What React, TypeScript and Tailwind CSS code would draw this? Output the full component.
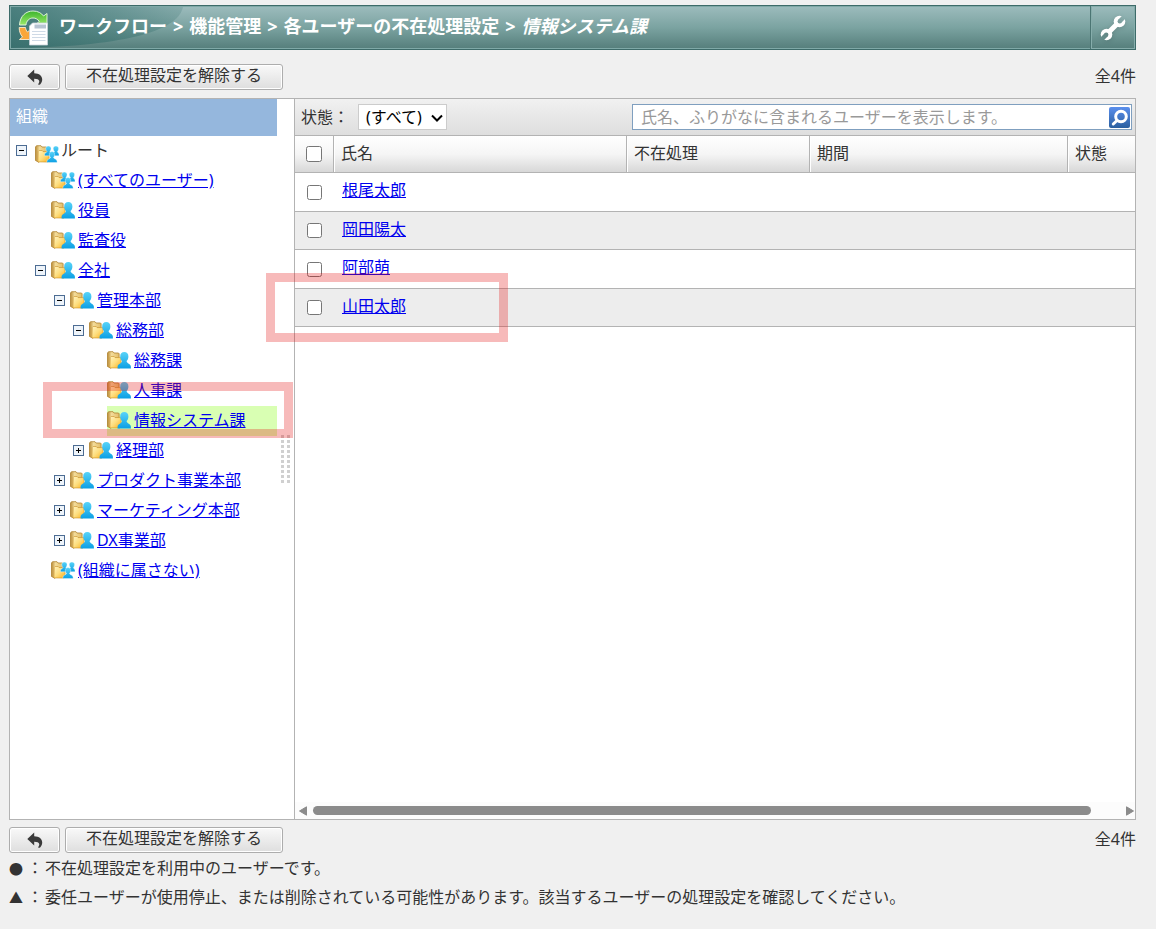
import React from "react";

type TreeNode = {
  label: string;
  depth: number;
  toggle?: "open" | "closed";
  group?: boolean;
  selected?: boolean;
};

const nodes: TreeNode[] = [
  { label: "(すべてのユーザー)", depth: 1, group: true },
  { label: "役員", depth: 1 },
  { label: "監査役", depth: 1 },
  { label: "全社", depth: 1, toggle: "open" },
  { label: "管理本部", depth: 2, toggle: "open" },
  { label: "総務部", depth: 3, toggle: "open" },
  { label: "総務課", depth: 4 },
  { label: "人事課", depth: 4 },
  { label: "情報システム課", depth: 4, selected: true },
  { label: "経理部", depth: 3, toggle: "closed" },
  { label: "プロダクト事業本部", depth: 2, toggle: "closed" },
  { label: "マーケティング本部", depth: 2, toggle: "closed" },
  { label: "DX事業部", depth: 2, toggle: "closed" },
  { label: "(組織に属さない)", depth: 1, group: true },
];

const indents = ["pl-[6px]", "pl-[25px]", "pl-[44px]", "pl-[63px]", "pl-[81px]"];

const users = ["根尾太郎", "岡田陽太", "阿部萌", "山田太郎"];

const notes = [
  { mark: "●", text: "不在処理設定を利用中のユーザーです。" },
  {
    mark: "▲",
    text: "委任ユーザーが使用停止、または削除されている可能性があります。該当するユーザーの処理設定を確認してください。",
  },
];

function IconDefs() {
  return (
    <svg className="absolute h-0 w-0" aria-hidden="true">
      <defs>
        <linearGradient id="folder" x1="0" y1="0" x2="1" y2="1">
          <stop offset="0" stopColor="#fff3c0" />
          <stop offset="0.5" stopColor="#fede7e" />
          <stop offset="1" stopColor="#fbb01c" />
        </linearGradient>
        <linearGradient id="folderBack" x1="0" y1="0" x2="1" y2="0">
          <stop offset="0" stopColor="#b98a35" />
          <stop offset="0.35" stopColor="#f3dc9a" />
          <stop offset="1" stopColor="#e3bd68" />
        </linearGradient>
        <linearGradient id="person" x1="0" y1="0" x2="0" y2="1">
          <stop offset="0" stopColor="#58d3f8" />
          <stop offset="1" stopColor="#0c9fe4" />
        </linearGradient>
        <linearGradient id="swoosh" x1="0" y1="0" x2="1" y2="0">
          <stop offset="0" stopColor="#2f6b69" stopOpacity="0.75" />
          <stop offset="0.6" stopColor="#2f6b69" stopOpacity="0.45" />
          <stop offset="1" stopColor="#2f6b69" stopOpacity="0.2" />
        </linearGradient>
        <linearGradient id="arrowGreen" x1="0" y1="0" x2="0" y2="1">
          <stop offset="0" stopColor="#3cb52c" />
          <stop offset="1" stopColor="#9be86a" />
        </linearGradient>
        <mask id="jaws">
          <path d="M0 0h28v28H0z" fill="#fff" />
          <path d="M21 7 27 1M7 21 1 27" stroke="#000" strokeWidth="4.400" />
          <circle cx="20.800" cy="7.200" r="2.200" fill="#000" />
          <circle cx="7.200" cy="20.800" r="2.200" fill="#000" />
        </mask>
      </defs>
    </svg>
  );
}

function FolderIcon({ group }: { group?: boolean }) {
  return (
    <svg className="h-[18px] w-6 shrink-0" viewBox="0 0 24 18" aria-hidden="true">
      <path d="M.5 2 1.500.7h4.500l1 1.300h4.500l.6.8v4H4v10.500L.5 15.500z" fill="url(#folderBack)" stroke="#b08330" strokeWidth=".8" />
      <path d="M2.900 16.900 3.200 6.500l1-1h3l.9 1.100h6v9.200l-1.200 1.300z" fill="url(#folder)" stroke="#c98f26" strokeWidth=".6" />
      {group ? (
        <g fill="url(#person)" stroke="#fff" strokeWidth=".4">
          <path d="M13.400 1c1.700 0 2.700 1.100 2.700 2.600 0 1.300-.7 2.300-1.200 2.900.3 1 2 1.400 2 2.800v1.500H9.500V9.300c0-1.400 2.300-1.800 2.500-2.800-.6-.6-1.300-1.600-1.300-2.900 0-1.500 1-2.600 2.700-2.600z" />
          <path d="M20.900 1c1.700 0 2.700 1.100 2.700 2.600 0 1.300-.6 2.300-1.200 2.900.1 1 1.600 1.400 1.600 2.800v1.500h-6.600V9.300c0-1.400 1.900-1.800 2.100-2.800-.6-.6-1.300-1.600-1.300-2.900 0-1.500 1-2.600 2.700-2.600z" />
          <path d="M17 6.500c1.800 0 2.700 1.200 2.700 2.800 0 1.500-.6 2.600-1.200 3.200.2 1.400 3.600 1.500 3.600 3.700v1.400H11.900v-1.400c0-2.200 3.400-2.300 3.600-3.700-.6-.6-1.200-1.700-1.200-3.200 0-1.600.9-2.800 2.700-2.800z" />
        </g>
      ) : (
        <path
          d="M17.300 1c2.600 0 4.100 1.700 4.100 4.400 0 2.100-.8 3.700-1.800 4.700.1 2.700 4.300 2.600 4.300 5.700v1.700H10.600v-1.700c0-3.100 4.300-3 4.400-5.700-1-1-1.800-2.600-1.800-4.700C13.200 2.700 14.700 1 17.300 1z"
          fill="url(#person)"
        />
      )}
    </svg>
  );
}

function Toggle({ state }: { state: "open" | "closed" }) {
  return (
    <button type="button" aria-label={state === "open" ? "閉じる" : "開く"} className="block h-3 w-[11px] pb-px">
      <svg className="h-[11px] w-[11px]" viewBox="0 0 11 11" shapeRendering="crispEdges">
        <rect x=".5" y=".5" width="10" height="10" fill="#eef4fa" stroke="#4c6c93" />
        <path d="M3 5h5v1H3z" fill="#000" />
        {state === "closed" && <path d="M5 3h1v5H5z" fill="#000" />}
      </svg>
    </button>
  );
}

function WorkflowIcon() {
  return (
    <svg className="h-9 w-8 shrink-0" viewBox="0 0 32 36" aria-hidden="true">
      <path d="M1.500 15C2 6 8 1 15 1c5 0 8.500 2.200 10.500 5l3.500-2.500V15H17.500l3.700-3.700C19.500 9 17.500 8 15 8c-4 0-6.500 3-7 7z" fill="url(#arrowGreen)" stroke="#e8fbe0" strokeWidth=".9" />
      <path d="M1.200 17.500c0 4 1.200 7 3.300 9.500L1.500 29.500H13V19l-3.500 3C8.300 20.800 7.700 19.300 7.500 17.500z" fill="#f9a63a" stroke="#fdebcf" strokeWidth=".9" />
      <path d="M14.500 13h15v22h-18V16z" fill="#fff" stroke="#c9d3dc" strokeWidth=".8" />
      <path d="M16.500 14.500h11.500v4H16.500z" fill="#b7c4d2" />
      <path d="M14 21.500h13.500M14 24.500h13.500M14 27.500h13.500M14 30.500h13.500" stroke="#cfdae6" />
    </svg>
  );
}

function WrenchIcon() {
  return (
    <svg className="h-7 w-7 drop-shadow-sm" viewBox="0 0 28 28" aria-hidden="true">
      <g mask="url(#jaws)">
        <path d="M8 20 20 8" stroke="#fff" strokeWidth="5" />
        <circle cx="20.500" cy="7.500" r="5.800" fill="#fff" />
        <circle cx="7.500" cy="20.500" r="5.800" fill="#fff" />
      </g>
    </svg>
  );
}

function ActionBar({ className }: { className: string }) {
  const button =
    "flex h-[26px] items-center justify-center rounded-[3px] border border-[#adadad] bg-linear-to-b from-[#f9f9f9] to-[#dedede] shadow-[inset_0_0_0_1px_#fff]";
  return (
    <div className={`flex justify-between ${className}`}>
      <div className="flex gap-[5px]">
        <button type="button" aria-label="戻る" className={`${button} w-[51px]`}>
          <svg className="h-4 w-4" viewBox="0 0 16 16" aria-hidden="true">
            <path d="M7.200.5v3.700c5 .2 8 2.400 8 6.300 0 2-.8 3.800-2.300 5.200l-2-.2c1.200-1.400 1.500-2.500 1.300-3.500-.3-1.500-2-2.200-5-2.200v3.700L.3 7z" fill="#3a3a3a" />
          </svg>
        </button>
        <button type="button" className={`${button} w-[218px] pb-1`}>
          不在処理設定を解除する
        </button>
      </div>
      <p className="leading-6">全4件</p>
    </div>
  );
}

function OrgTree() {
  return (
    <nav className="flex w-[285px] shrink-0 border-r border-[#b3b3b3] bg-white">
      <div className="min-w-0 flex-1">
        <h2 className="h-[37px] bg-[#95b7dd] px-[6px] leading-[34px] text-white">組織</h2>
        <ul>
          <li className="flex h-[30px] items-center pl-[6px]">
            <Toggle state="open" />
            <span className="ml-2 pt-1.5">
              <FolderIcon group />
            </span>
            <span className="ml-0.5 pb-0.5">ルート</span>
          </li>
          {nodes.map((node) => (
            <li key={node.label} className={`flex h-[30px] items-center gap-[5px] ${indents[node.depth]}`}>
              <span className="w-[11px] shrink-0">{node.toggle && <Toggle state={node.toggle} />}</span>
              <span className={`flex h-full flex-1 items-center gap-[3px] pb-0.5 ${node.selected ? "bg-[#d9ffb3]" : ""}`}>
                <FolderIcon group={node.group} />
                <a href="#" className="whitespace-nowrap text-[#0000ee] underline">
                  {node.label}
                </a>
              </span>
            </li>
          ))}
        </ul>
      </div>
      {/* splitter */}
      <div className="flex w-[17px] cursor-col-resize items-center justify-center">
        <div className="grid grid-cols-2 gap-x-[3px] gap-y-[2px]">
          {Array.from({ length: 20 }, (_, i) => (
            <i key={i} className="h-[3px] w-[3px] bg-[#d0d0d0]" />
          ))}
        </div>
      </div>
    </nav>
  );
}

function FilterBar() {
  return (
    <div className="flex h-[37px] items-center justify-between border-b border-[#b3b3b3] bg-linear-to-b from-[#f1f1f1] to-[#dedede] pr-[3px] pl-[6px]">
      <div className="flex items-center">
        <label htmlFor="status" className="w-[57px] whitespace-nowrap">
          状態：
        </label>
        <div className="relative">
          <select id="status" className="h-[26px] w-[89px] appearance-none border border-[#ccc] bg-white pl-[7px] text-black">
            <option>(すべて)</option>
          </select>
          <svg className="pointer-events-none absolute top-2 right-1 h-3 w-3" viewBox="0 0 12 12" aria-hidden="true">
            <path d="M1 3.500l5 5 5-5" fill="none" stroke="#000" strokeWidth="2" />
          </svg>
        </div>
      </div>
      <div className="flex h-[26px] w-[500px] items-center border border-[#7f9fbf] bg-white pr-px">
        <input
          type="text"
          aria-label="ユーザー検索"
          placeholder="氏名、ふりがなに含まれるユーザーを表示します。"
          className="h-full min-w-0 flex-1 px-2 outline-none placeholder:text-[#999]"
        />
        <button type="button" aria-label="検索" className="h-[21px] w-[21px] rounded-xs bg-linear-to-b from-[#5a8fee] to-[#2a5f9f]">
          <svg className="h-[21px] w-[21px]" viewBox="0 0 21 21">
            <circle cx="12" cy="9.500" r="5.300" fill="none" stroke="#fff" strokeWidth="3" />
            <path d="M8 13.500 4.300 17" stroke="#fff" strokeWidth="3" strokeLinecap="round" />
          </svg>
        </button>
      </div>
    </div>
  );
}

function UserTable() {
  const th = "border-r border-b border-[#b3b3b3] px-[7px] pb-0.5 text-left font-normal shadow-[inset_1px_0_0_#fff] last:border-r-0";
  return (
    <table className="w-full table-fixed border-separate border-spacing-0">
      <colgroup>
        <col className="w-[39px]" />
        <col />
        <col className="w-[183px]" />
        <col className="w-[258px]" />
        <col className="w-[67px]" />
      </colgroup>
      <thead>
        <tr className="h-[37px] bg-linear-to-b from-white via-[#f5f5f5] to-[#d6d6d6]">
          <th className="border-r border-b border-[#b3b3b3]">
            <input type="checkbox" aria-label="すべて選択" className="mx-auto block h-4 w-4" />
          </th>
          <th className={th}>氏名</th>
          <th className={th}>不在処理</th>
          <th className={th}>期間</th>
          <th className={th}>状態</th>
        </tr>
      </thead>
      <tbody>
        {users.map((name) => (
          <tr key={name} className="odd:h-[39px] even:h-[38px] even:bg-[#ededed]">
            <td className="border-b border-[#b3b3b3]">
              <input type="checkbox" aria-label={name} className="mx-auto block h-[15px] w-[15px]" />
            </td>
            <td className="border-b border-[#b3b3b3] px-2 pb-1">
              <a href="#" className="text-[#0000ee] underline">
                {name}
              </a>
            </td>
            <td className="border-b border-[#b3b3b3]" />
            <td className="border-b border-[#b3b3b3]" />
            <td className="border-b border-[#b3b3b3]" />
          </tr>
        ))}
      </tbody>
    </table>
  );
}

function ScrollBar() {
  return (
    <div className="mt-auto flex h-[17px] items-center bg-[#fcfcfc] px-1" aria-hidden="true">
      <svg className="h-[10px] w-2" viewBox="0 0 8 10">
        <path d="M7.500.8v8.400L.5 5z" fill="#8b8b8b" stroke="#8b8b8b" strokeLinejoin="round" />
      </svg>
      <div className="mr-[35px] ml-1.5 h-[9px] flex-1 rounded-full bg-[#8b8b8b]" />
      <svg className="-mr-[3px] h-[10px] w-2" viewBox="0 0 8 10">
        <path d="M.5.8v8.400l7-4.200z" fill="#8b8b8b" stroke="#8b8b8b" strokeLinejoin="round" />
      </svg>
    </div>
  );
}

function Header() {
  return (
    <header className="relative flex h-[45px] items-center border border-[#3d6b69] bg-linear-to-b from-[#9dbcbd] via-[#7ba3a1] to-[#557e7b] shadow-[inset_0_0_0_1px_#7fa9a7]">
      <svg className="absolute inset-y-0 left-0 h-full w-[175px]" viewBox="0 0 175 43" preserveAspectRatio="none" aria-hidden="true">
        <path d="M1 1h172C168 26 110 41 1 42z" fill="url(#swoosh)" />
      </svg>
      <div className="relative ml-2">
        <WorkflowIcon />
      </div>
      <h1 className="relative ml-[9px] flex flex-1 gap-1.5 pb-1 text-[18px] leading-6 font-bold whitespace-nowrap text-white">
        <span>ワークフロー</span>
        <span>&gt;</span>
        <span>機能管理</span>
        <span>&gt;</span>
        <span>各ユーザーの不在処理設定</span>
        <span>&gt;</span>
        <em>情報システム課</em>
      </h1>
      <button
        type="button"
        aria-label="設定"
        className="flex h-full w-[45px] items-center justify-center border-l border-[#4b7573] shadow-[inset_0_0_0_1px_#86adab]"
      >
        <WrenchIcon />
      </button>
    </header>
  );
}

export default function App() {
  return (
    <div className="flex min-h-screen flex-col bg-[#f0f0f0] pt-[5px] pr-5 pb-[17px] pl-[9px] font-['Noto_Sans','Noto_Sans_CJK_JP',sans-serif] text-[16px] leading-6 text-[#333]">
      <IconDefs />
      <Header />
      <ActionBar className="mt-[14px] mb-2" />
      <main className="relative flex flex-1 border border-[#b3b3b3] bg-white">
        <OrgTree />
        <section className="flex min-w-0 flex-1 flex-col">
          <FilterBar />
          <UserTable />
          <ScrollBar />
        </section>
        {/* callout frames */}
        <div className="pointer-events-none absolute top-[174px] left-[256px] h-[69px] w-[242px] border-[9px] border-[rgba(228,17,17,0.29)]" />
        <div className="pointer-events-none absolute top-[283px] left-[33px] h-[56px] w-[250px] border-[9px] border-[rgba(228,17,17,0.29)]" />
      </main>
      <ActionBar className="mt-[7px]" />
      <ul className="mt-px leading-[29px]">
        {notes.map((note) => (
          <li key={note.mark} className="flex">
            <span className="w-[18px] text-[14px]">{note.mark}</span>
            <span className="w-[18px]">：</span>
            <span>{note.text}</span>
          </li>
        ))}
      </ul>
    </div>
  );
}
